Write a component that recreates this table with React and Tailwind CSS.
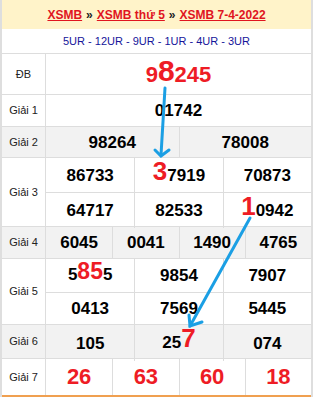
import React from "react";

const B = "border-[#dddddd]";

function Num({ children, className = "", red = false }) {
  return (
    <div
      className={`flex items-center justify-center font-bold leading-none ${
        red ? "text-[22px] text-[#ee1c25]" : "text-[17px] text-black"
      } ${className}`}
    >
      {children}
    </div>
  );
}

function Row({ label, h, bg = "bg-white", children, last = false }) {
  return (
    <div className={`flex ${h} ${bg} ${last ? "border-b-2 border-b-[#f0a050]" : `border-b ${B}`}`}>
      <div className={`w-[44px] shrink-0 flex items-center justify-center text-[11px] text-[#222] border-r ${B}`}>
        {label}
      </div>
      <div className="flex-1 flex flex-col">{children}</div>
    </div>
  );
}

export default function App() {
  return (
    <div className="relative w-[313px] h-[397px] bg-white font-['Liberation_Sans',Arial,sans-serif] border-x-2 border-[#dedede] overflow-hidden">
      {/* header */}
      <div className="h-[29px] bg-[#fff3c9] flex items-center justify-center text-[12px] font-bold text-[#e0151f]">
        <span className="underline">XSMB</span>
        <span className="text-[#222] mx-[4px]">»</span>
        <span className="underline">XSMB thứ 5</span>
        <span className="text-[#222] mx-[4px]">»</span>
        <span className="underline">XSMB 7-4-2022</span>
      </div>
      <div className={`h-[25px] flex items-center justify-center text-[11px] font-medium text-[#14149a] border-b ${B}`}>
        5UR - 12UR - 9UR - 1UR - 4UR - 3UR
      </div>

      <Row label="ĐB" h="h-[41px]">
        <div className="flex-1 flex items-end justify-center pb-[8px] font-bold text-[#ee1c25] leading-none">
          <span className="text-[22px]">9</span>
          <span className="text-[30px]">8</span>
          <span className="text-[22px]">245</span>
        </div>
      </Row>

      <Row label="Giải 1" h="h-[32px]">
        <Num className="flex-1">01742</Num>
      </Row>

      <Row label="Giải 2" h="h-[31px]" bg="bg-[#f2f2f2]">
        <div className="flex-1 grid grid-cols-2">
          <Num>98264</Num>
          <Num className={`border-l ${B}`}>78008</Num>
        </div>
      </Row>

      <Row label="Giải 3" h="h-[69px]">
        <div className={`h-[35px] grid grid-cols-3 border-b ${B}`}>
          <Num>86733</Num>
          <Num className={`border-l ${B} items-end pb-[9px]`}>
            <span className="text-[26px] text-[#ee1c25]">3</span>7919
          </Num>
          <Num className={`border-l ${B}`}>70873</Num>
        </div>
        <div className="flex-1 grid grid-cols-3">
          <Num>64717</Num>
          <Num className={`border-l ${B}`}>82533</Num>
          <Num className={`border-l ${B} items-end pb-[9px]`}>
            <span className="text-[26px] text-[#ee1c25]">1</span>0942
          </Num>
        </div>
      </Row>

      <Row label="Giải 4" h="h-[32px]" bg="bg-[#f2f2f2]">
        <div className="flex-1 grid grid-cols-4">
          <Num>6045</Num>
          <Num className={`border-l ${B}`}>0041</Num>
          <Num className={`border-l ${B}`}>1490</Num>
          <Num className={`border-l ${B}`}>4765</Num>
        </div>
      </Row>

      <Row label="Giải 5" h="h-[66px]">
        <div className={`h-[34px] grid grid-cols-3 border-b ${B}`}>
          <Num className="items-end pb-[9px]">
            5<span className="text-[23px] text-[#ee1c25]">85</span>5
          </Num>
          <Num className={`border-l ${B}`}>9854</Num>
          <Num className={`border-l ${B}`}>7907</Num>
        </div>
        <div className="flex-1 grid grid-cols-3">
          <Num>0413</Num>
          <Num className={`border-l ${B}`}>7569</Num>
          <Num className={`border-l ${B}`}>5445</Num>
        </div>
      </Row>

      <Row label="Giải 6" h="h-[34px]" bg="bg-[#f2f2f2]">
        <div className="flex-1 grid grid-cols-3">
          <Num>105</Num>
          <Num className={`border-l ${B} items-end pb-[10px]`}>
            25<span className="text-[26px] text-[#ee1c25]">7</span>
          </Num>
          <Num className={`border-l ${B}`}>074</Num>
        </div>
      </Row>

      <Row label="Giải 7" h="h-[38px]" last>
        <div className="flex-1 grid grid-cols-4">
          <Num red>26</Num>
          <Num red className={`border-l ${B}`}>63</Num>
          <Num red className={`border-l ${B}`}>60</Num>
          <Num red className={`border-l ${B}`}>18</Num>
        </div>
      </Row>

      {/* arrows overlay */}
      <svg className="absolute left-[-2px] top-0 pointer-events-none" width="313" height="397" viewBox="0 0 313 397">
        <g stroke="#1b9fe4" strokeWidth="3" strokeLinecap="round" fill="none">
          <path d="M165 88 L161 155" />
          <path d="M155 150 L161 156 L169 150" />
          <path d="M250 218 L190 326" />
          <path d="M189 315 L190 326 L202 322" />
        </g>
      </svg>
    </div>
  );
}
